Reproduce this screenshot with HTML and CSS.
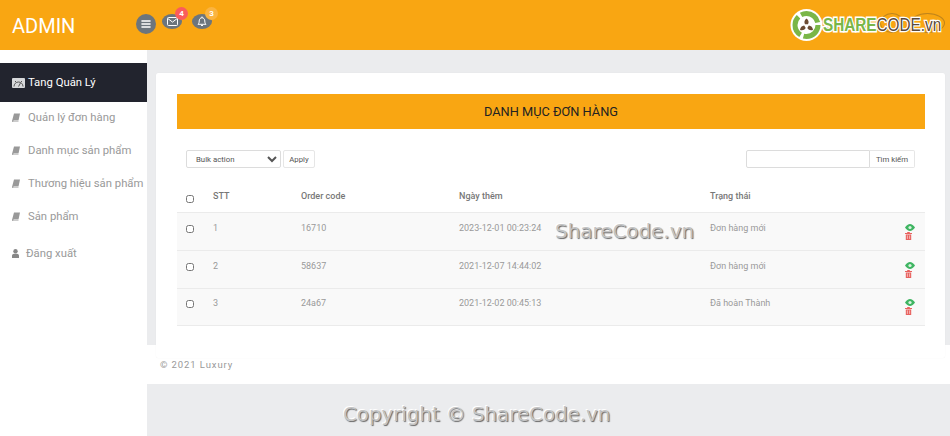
FILE: index.html
```html
<!DOCTYPE html>
<html lang="en">
<head>
    <meta charset="UTF-8">
    <meta name="viewport" content="width=device-width, initial-scale=1.0">
    <title>Admin</title>
    <link rel="stylesheet" href="styles.css">
</head>
<body>
    <header class="topbar">
        <div class="brand">ADMIN</div>
        <div class="top-icons">
            <span class="icon-round">
                <svg width="10" height="10" viewBox="0 0 10 10"><path d="M1 2h8M1 5h8M1 8h8" stroke="#fff" stroke-width="1.6" stroke-linecap="round"/></svg>
            </span>
            <span class="icon-pill">
                <svg width="11" height="9" viewBox="0 0 11 9" fill="none" stroke="#fff" stroke-width="1"><rect x=".5" y=".5" width="10" height="8" rx="1"/><path d="M.8 1.500l4.700 3.600 4.700-3.600"/></svg>
                <span class="badge badge-red">4</span>
            </span>
            <span class="icon-pill">
                <svg width="10" height="11" viewBox="0 0 10 11" fill="none" stroke="#fff" stroke-width="1"><path d="M1 8.300c.9-.9 1.200-1.600 1.200-3.300C2.200 3.200 3.400 1.700 5 1.700S7.800 3.200 7.800 5c0 1.700.3 2.400 1.200 3.300z"/><path d="M4 9.500h2M5 .5v1"/></svg>
                <span class="badge badge-orange">3</span>
            </span>
        </div>
        <span class="ghost ghost-one"></span>
        <span class="ghost ghost-two"></span>
        <div class="logo">
            <svg class="logo-mark" width="33" height="32" viewBox="0 0 33 32">
                <circle cx="16.500" cy="16" r="16" fill="#fff"/>
                <circle class="logo-ring" cx="16.500" cy="16" r="11.500"/>
                <path d="M16.500 9.500c2.200 1.500 2.600 3.800 1.500 5.800h-3c-1.100-2-.7-4.300 1.500-5.800z" fill="#6b4a32"/>
                <path d="M10 21c.2-2.700 1.900-4.300 4.200-4.500l1.500 2.600c-1.200 2-3.300 2.800-5.700 1.900z" fill="#6b4a32"/>
                <path d="M23 21c-2.400.9-4.500.1-5.700-1.900l1.500-2.600c2.300.2 4 1.800 4.200 4.500z" fill="#6b4a32"/>
            </svg>
            <span class="logo-text"><span class="logo-share">SHARE</span><span class="logo-code">CODE.vn</span></span>
        </div>
    </header>

    <div class="layout">
        <aside class="sidebar">
            <a class="side-item active">
                <svg class="side-icon-dash" width="13" height="10" viewBox="0 0 13 10"><rect width="13" height="10" rx="1" fill="#d7d8da"/><path d="M2 8.500a4.500 4.500 0 0 1 9 0M6.500 8.500l2-3.500" fill="none" stroke="#555" stroke-width="1"/><path d="M3.500 3v1M9.500 3v1" stroke="#555"/></svg>
                Tang Quản Lý
            </a>
            <a class="side-item">
                <svg class="book" width="8" height="9" viewBox="0 0 8 9"><path d="M2 .5h6L6.500 7.500H1.600L1 8.500h5.500v.5H.4L0 8z" fill="#999"/></svg>
                Quản lý đơn hàng
            </a>
            <a class="side-item">
                <svg class="book" width="8" height="9" viewBox="0 0 8 9"><path d="M2 .5h6L6.500 7.500H1.600L1 8.500h5.500v.5H.4L0 8z" fill="#999"/></svg>
                Danh mục sản phẩm
            </a>
            <a class="side-item">
                <svg class="book" width="8" height="9" viewBox="0 0 8 9"><path d="M2 .5h6L6.500 7.500H1.600L1 8.500h5.500v.5H.4L0 8z" fill="#999"/></svg>
                Thương hiệu sản phẩm
            </a>
            <a class="side-item">
                <svg class="book" width="8" height="9" viewBox="0 0 8 9"><path d="M2 .5h6L6.500 7.500H1.600L1 8.500h5.500v.5H.4L0 8z" fill="#999"/></svg>
                Sản phẩm
            </a>
            <a class="side-item logout">
                <svg class="user" width="7" height="9" viewBox="0 0 7 9"><circle cx="3.500" cy="2.200" r="2.200" fill="#888"/><path d="M0 9V6.800C0 5.500 1 4.800 2 4.800h3c1 0 2 .7 2 2V9z" fill="#888"/></svg>
                Đăng xuất
            </a>
        </aside>

        <div class="main">
            <div class="panel">
                <section class="card">
                    <h2 class="banner">DANH MỤC ĐƠN HÀNG</h2>

                    <div class="toolbar">
                        <div class="tool-group">
                            <select class="bulk"><option>Bulk action</option></select>
                            <button class="btn btn-apply" type="button">Apply</button>
                        </div>
                        <div class="search-group">
                            <input class="search" type="text">
                            <button class="btn btn-search" type="button">Tìm kiếm</button>
                        </div>
                    </div>

                    <div class="table">
                        <div class="row head">
                            <input type="checkbox">
                            <span>STT</span>
                            <span>Order code</span>
                            <span>Ngày thêm</span>
                            <span>Trạng thái</span>
                        </div>
                        <div class="row">
                            <input type="checkbox">
                            <span>1</span>
                            <span>16710</span>
                            <span>2023-12-01 00:23:24</span>
                            <span>Đơn hàng mới</span>
                            <span class="actions">
                                <svg width="10" height="7" viewBox="0 0 10 7"><path d="M0 3.500C1.500 1.200 3.200 0 5 0s3.500 1.200 5 3.500C8.500 5.800 6.800 7 5 7S1.500 5.800 0 3.500z" fill="#3fb562"/><circle cx="5" cy="3.500" r="1.600" fill="#d9f3e0"/></svg>
                                <svg width="7" height="8" viewBox="0 0 7 8"><path d="M0 1h7v1H0zM2.200 0h2.600v1H2.200zM.8 2.400h5.400V8H.8z" fill="#e8625f"/><path d="M2.400 3.400v3.500M4.600 3.400v3.500" stroke="#fbdcdc" stroke-width=".7"/></svg>
                            </span>
                        </div>
                        <div class="row">
                            <input type="checkbox">
                            <span>2</span>
                            <span>58637</span>
                            <span>2021-12-07 14:44:02</span>
                            <span>Đơn hàng mới</span>
                            <span class="actions">
                                <svg width="10" height="7" viewBox="0 0 10 7"><path d="M0 3.500C1.500 1.200 3.200 0 5 0s3.500 1.200 5 3.500C8.500 5.800 6.800 7 5 7S1.500 5.800 0 3.500z" fill="#3fb562"/><circle cx="5" cy="3.500" r="1.600" fill="#d9f3e0"/></svg>
                                <svg width="7" height="8" viewBox="0 0 7 8"><path d="M0 1h7v1H0zM2.200 0h2.600v1H2.200zM.8 2.400h5.400V8H.8z" fill="#e8625f"/><path d="M2.400 3.400v3.500M4.600 3.400v3.500" stroke="#fbdcdc" stroke-width=".7"/></svg>
                            </span>
                        </div>
                        <div class="row">
                            <input type="checkbox">
                            <span>3</span>
                            <span>24a67</span>
                            <span>2021-12-02 00:45:13</span>
                            <span>Đã hoàn Thành</span>
                            <span class="actions">
                                <svg width="10" height="7" viewBox="0 0 10 7"><path d="M0 3.500C1.500 1.200 3.200 0 5 0s3.500 1.200 5 3.500C8.500 5.800 6.800 7 5 7S1.500 5.800 0 3.500z" fill="#3fb562"/><circle cx="5" cy="3.500" r="1.600" fill="#d9f3e0"/></svg>
                                <svg width="7" height="8" viewBox="0 0 7 8"><path d="M0 1h7v1H0zM2.200 0h2.600v1H2.200zM.8 2.400h5.400V8H.8z" fill="#e8625f"/><path d="M2.400 3.400v3.500M4.600 3.400v3.500" stroke="#fbdcdc" stroke-width=".7"/></svg>
                            </span>
                        </div>
                    </div>
                </section>
            </div>
            <footer class="footer">© 2021 Luxury</footer>
            <div class="bottom-space"></div>
        </div>
    </div>

    <div class="mark mark-center">ShareCode.vn</div>
    <div class="mark mark-bottom">Copyright © ShareCode.vn</div>
</body>
</html>
```

FILE: styles.css
```css
* {
    margin: 0;
    padding: 0;
    box-sizing: border-box;
}

body {
    font-family: Roboto, "Liberation Sans", sans-serif;
    background: #fff;
    height: 436px;
    overflow: hidden;
    position: relative;
}

.topbar {
    height: 50px;
    background: #f9a612;
    display: flex;
    align-items: flex-start;
    position: relative;
}

.brand {
    color: #fff;
    font-size: 20px;
    line-height: 52px;
    padding-left: 12px;
    width: 136px;
}

.top-icons {
    display: flex;
    align-items: flex-start;
    gap: 10px;
    padding-top: 14px;
}

.icon-round {
    width: 20px;
    height: 20px;
    border-radius: 50%;
    background: #6c757d;
    display: flex;
    align-items: center;
    justify-content: center;
}

.icon-pill {
    width: 20px;
    height: 15px;
    border-radius: 50%;
    background: #6c757d;
    display: flex;
    align-items: center;
    justify-content: center;
    position: relative;
}

.icon-round + .icon-pill {
    margin-left: -4px;
}

.badge {
    position: absolute;
    top: -7px;
    right: -6px;
    width: 13px;
    height: 13px;
    border-radius: 50%;
    color: #fff;
    font-size: 8px;
    font-weight: 700;
    line-height: 13px;
    text-align: center;
}

.badge-red {
    background: #fa5c5c;
}

.badge-orange {
    background: #fbb440;
}

/* faint round buttons that show behind the logo */
.ghost {
    position: absolute;
    top: 13px;
    height: 20px;
    border: 1px solid rgba(120, 90, 40, 0.45);
    border-radius: 50%;
}

.ghost-one {
    left: 880px;
    width: 24px;
}

.ghost-two {
    left: 910px;
    width: 35px;
}

.logo {
    position: absolute;
    left: 790px;
    top: 9px;
    height: 32px;
    display: flex;
    align-items: center;
    font-family: "Liberation Sans", sans-serif;
    font-size: 18px;
    white-space: nowrap;
}

.logo-ring {
    fill: none;
    stroke: #7ab648;
    stroke-width: 5;
    stroke-dasharray: 21 3.100;
}

.logo-text {
    display: inline-block;
    transform: scaleX(0.85);
    transform-origin: left center;
}

.logo-share {
    color: #7ab648;
    font-weight: 700;
    -webkit-text-stroke: 3px #fff;
    paint-order: stroke fill;
}

.logo-code {
    color: #5b4a3c;
    -webkit-text-stroke: 2.5px #fff;
    paint-order: stroke fill;
}

.layout {
    display: flex;
    height: 386px;
}

.sidebar {
    width: 147px;
    flex-shrink: 0;
    padding-top: 13px;
    background: #fff;
}

.side-item {
    display: flex;
    align-items: center;
    height: 33px;
    padding-left: 12px;
    color: #999;
    font-size: 11.300px;
    white-space: nowrap;
}

.side-item.active {
    height: 39px;
    margin-bottom: -1px;
    background: #22242e;
    color: #fff;
}

.side-icon-dash {
    margin-right: 3px;
    flex-shrink: 0;
}

.book {
    margin-right: 8px;
    flex-shrink: 0;
}

.user {
    margin-right: 7px;
    flex-shrink: 0;
}

.logout {
    margin-top: 4px;
}

.main {
    flex: 1;
    display: flex;
    flex-direction: column;
    min-width: 0;
}

.panel {
    height: 295px;
    background: #ebecee;
    padding: 23px 5px 0 9px;
}

.card {
    position: relative;
    height: 285px;
    background: #fff;
    border-radius: 2px;
    box-shadow: 0 0 1px rgba(0, 0, 0, 0.08);
    padding: 21px 20px 0 21px;
}

.banner {
    height: 35px;
    background: #f9a612;
    color: #222;
    font-size: 12.800px;
    font-weight: 400;
    line-height: 35px;
    text-align: center;
}

.toolbar {
    display: flex;
    justify-content: space-between;
    padding: 21px 10px 0 9px;
}

.tool-group,
.search-group {
    display: flex;
}

.tool-group {
    gap: 2px;
}

.bulk {
    width: 95px;
    height: 18px;
    border: 1px solid #dcdcdc;
    border-radius: 2px;
    background: #fff;
    color: #555;
    font-family: inherit;
    font-size: 7.800px;
    padding-left: 5px;
}

.btn {
    height: 18px;
    border: 1px solid #e6e6e6;
    border-radius: 2px;
    background: #fff;
    color: #555;
    font-family: inherit;
    font-size: 7.800px;
    white-space: nowrap;
}

.btn-apply {
    width: 32px;
}

.search {
    width: 124px;
    height: 18px;
    border: 1px solid #dcdcdc;
    border-radius: 2px 0 0 2px;
}

.btn-search {
    width: 45px;
    border-left: none;
    border-radius: 0 2px 2px 0;
}

.table {
    margin-top: 12px;
}

.row {
    display: grid;
    grid-template-columns: 27px 88px 158px 251px 1fr 20px;
    align-items: center;
    height: 38px;
    padding-left: 9px;
    background: #f9f9f9;
    border-bottom: 1px solid #ebebeb;
    color: #999;
    font-size: 9px;
}

.row:last-child {
    height: 37px;
}

.row.head {
    height: 33px;
    background: #fff;
    color: #777;
    font-weight: 500;
}

.row input {
    width: 8px;
    height: 8px;
    margin: 0;
    position: relative;
    top: -3px;
}

.row span {
    position: relative;
    top: -4px;
}

.row.head span {
    top: 0;
}

.row.head input {
    top: 3px;
}

.row .actions {
    top: 0;
    display: flex;
    flex-direction: column;
    align-items: flex-start;
    gap: 1px;
}

.footer {
    height: 39px;
    background: #fff;
    padding: 14px 0 0 13px;
    color: #999;
    font-size: 9.500px;
    letter-spacing: 0.9px;
}

.bottom-space {
    flex: 1;
    background: #ebecee;
}

.mark {
    position: absolute;
    font-family: "DejaVu Sans", sans-serif;
    color: #c4c4c4;
    text-shadow: 1px 1px 1px #666, -1px -1px 0 #fff;
    white-space: nowrap;
}

.mark-center {
    left: 555px;
    top: 220px;
    font-size: 19.900px;
}

.mark-bottom {
    left: 343px;
    top: 403px;
    font-size: 19.800px;
}
```
